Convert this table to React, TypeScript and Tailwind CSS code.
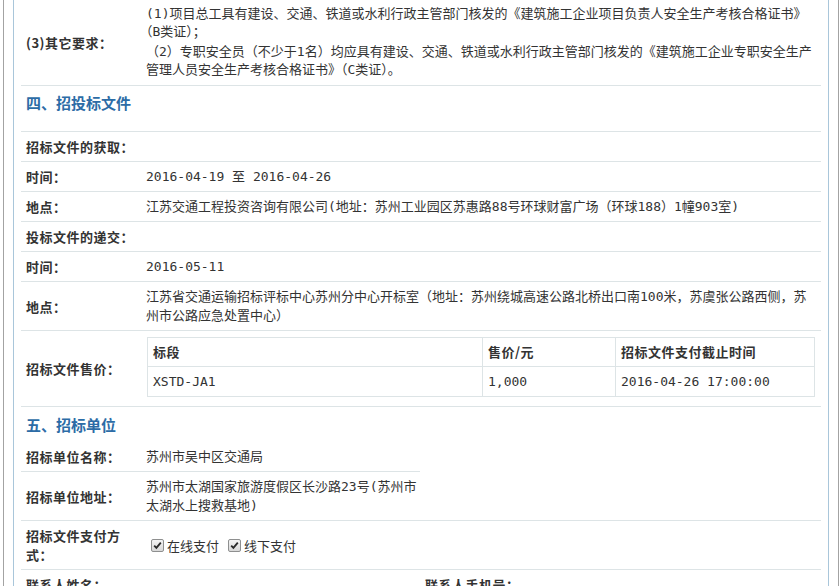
import React from "react";

const FONT = "font-['Noto_Sans_CJK_SC','Liberation_Sans',sans-serif]";
const VAL = "font-['DejaVu_Sans_Mono','Noto_Sans_CJK_SC',monospace]";

function Check() {
  return (
    <span className="inline-flex h-[13px] w-[13px] items-center justify-center border border-[#8e8f8f] bg-gradient-to-b from-[#f4f4f4] to-[#d8d8d8] rounded-[2px]">
      <svg width="9" height="9" viewBox="0 0 9 9">
        <path d="M1.2 4.6 L3.4 6.9 L7.8 1.6" stroke="#2a2a2a" strokeWidth="1.8" fill="none" />
      </svg>
    </span>
  );
}

function Row({
  label,
  children,
  className = "",
  border = true,
  tight = false,
}: {
  label: React.ReactNode;
  children?: React.ReactNode;
  className?: string;
  border?: boolean;
  tight?: boolean;
}) {
  return (
    <div className={`grid grid-cols-[120px_1fr] ${border ? "border-b border-[#dde4e6]" : ""} ${className}`}>
      <div className="flex items-center px-[5px] pt-[5px] pb-[5px] text-[13px] leading-[19px] font-bold tracking-[0.5px] text-[#333]">
        {label}
      </div>
      <div className={`${VAL} flex items-center pl-[5px] ${tight ? "pr-0" : "pr-[5px]"} pt-[5px] pb-[5px] text-[13px] leading-[19px] text-[#333]`}>
        <div>{children}</div>
      </div>
    </div>
  );
}

export default function App() {
  return (
    <div className={`${FONT} bg-white h-[586px] overflow-hidden`}>
      <div className="ml-[3px] h-[586px] border-x border-[#a3a3a3] px-[9px]">
        <div className="h-full border-x border-[#a9c6da] px-[7px]">
          {/* (3) 其它要求 */}
          <div className="grid grid-cols-[120px_1fr] border-b border-[#dde4e6]">
            <div className="flex items-center px-[5px] text-[13px] font-bold tracking-[0.5px] text-[#333]">(3)其它要求：</div>
            <div className={`${VAL} px-[5px] pt-[5px] pb-[6px] text-[13px] leading-[18px] text-[#333]`}>
              <p>
                (1)项目总工具有建设、交通、铁道或水利行政主管部门核发的《建筑施工企业项目负责人安全生产考核合格证书》
                <span className="whitespace-nowrap">（B类证）；</span>
              </p>
              <p className="mt-[2px]">（2）专职安全员（不少于1名）均应具有建设、交通、铁道或水利行政主管部门核发的《建筑施工企业专职安全生产管理人员安全生产考核合格证书》（C类证）。</p>
            </div>
          </div>

          {/* Section 4 */}
          <div className="border-b border-[#dde4e6] px-[5px] pt-[5px] pb-[16px] text-[15px] leading-[24px] font-bold text-[#2c6ca6]">
            四、招投标文件
          </div>
          <Row label="招标文件的获取：" />
          <Row label="时间：">2016-04-19 至 2016-04-26</Row>
          <Row label="地点：">江苏交通工程投资咨询有限公司(地址：苏州工业园区苏惠路88号环球财富广场（环球188）1幢903室)</Row>
          <Row label="投标文件的递交：" />
          <Row label="时间：">2016-05-11</Row>
          <Row label="地点：">江苏省交通运输招标评标中心苏州分中心开标室（地址：苏州绕城高速公路北桥出口南100米，苏虞张公路西侧，苏州市公路应急处置中心）</Row>

          {/* Price */}
          <div className="grid grid-cols-[120px_1fr] border-b border-[#dde4e6]">
            <div className="flex items-center px-[5px] text-[13px] font-bold tracking-[0.5px] text-[#333]">招标文件售价：</div>
            <div className="pl-[6px] pr-[5px] pt-[6px] pb-[9px]">
              <div className={`${VAL} w-[668px] border border-[#dde4e6] text-[13px] text-[#333]`}>
                <div className={`${FONT} grid grid-cols-[334px_133px_1fr] border-b border-[#dde4e6] h-[29px] items-stretch font-bold tracking-[0.5px]`}>
                  <div className="flex items-center pl-[5px]">标段</div>
                  <div className="flex items-center border-l border-[#dde4e6] pl-[5px]">售价/元</div>
                  <div className="flex items-center border-l border-[#dde4e6] pl-[5px]">招标文件支付截止时间</div>
                </div>
                <div className="grid grid-cols-[334px_133px_1fr] h-[29px] items-stretch">
                  <div className="flex items-center pl-[5px]">XSTD-JA1</div>
                  <div className="flex items-center border-l border-[#dde4e6] pl-[5px]">1,000</div>
                  <div className="flex items-center border-l border-[#dde4e6] pl-[5px]">2016-04-26 17:00:00</div>
                </div>
              </div>
            </div>
          </div>

          {/* Section 5 */}
          <div className="px-[5px] pt-[6px] pb-[5px] text-[15px] leading-[24px] font-bold text-[#2c6ca6]">
            五、招标单位
          </div>
          <div className="flex border-b border-[#dde4e6]">
            <div className="w-[399px]">
              <Row label="招标单位名称：">苏州市吴中区交通局</Row>
              <Row label="招标单位地址：" border={false} tight>苏州市太湖国家旅游度假区长沙路23号(苏州市太湖水上搜救基地)</Row>
            </div>
            <div className="flex-1" />
          </div>
          <Row label="招标文件支付方式：">
            <div className={`${FONT} flex items-center pl-[5px]`}>
              <Check />
              <span className="ml-[3px]">在线支付</span>
              <span className="ml-[9px] inline-flex"><Check /></span>
              <span className="ml-[3px]">线下支付</span>
            </div>
          </Row>
          <div className="grid grid-cols-[399px_1fr]">
            <div className="px-[5px] pt-[5px] text-[13px] leading-[19px] font-bold tracking-[0.5px] text-[#333]">联系人姓名：</div>
            <div className="px-[5px] pt-[5px] text-[13px] leading-[19px] font-bold tracking-[0.5px] text-[#333]">联系人手机号：</div>
          </div>
        </div>
      </div>
    </div>
  );
}
